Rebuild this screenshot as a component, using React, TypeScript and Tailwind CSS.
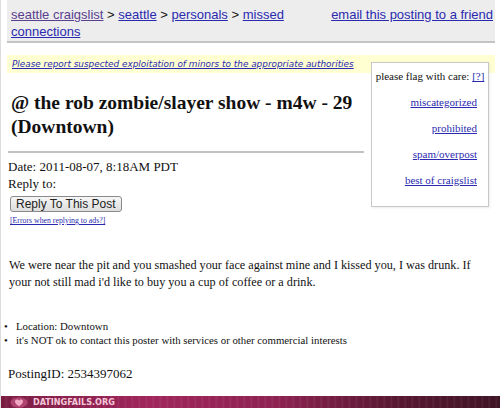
import React from "react";

const serif = { fontFamily: '"Liberation Serif", "Times New Roman", serif' };
const sans = { fontFamily: '"Liberation Sans", Arial, sans-serif' };

const flagLinks = ["miscategorized", "prohibited", "spam/overpost", "best of craigslist"];

function HeartLogo() {
  return (
    <svg width="18" height="11" viewBox="0 0 18 11">
      <ellipse cx="9" cy="5.5" rx="8.5" ry="5.2" fill="#b84a78" opacity="0.85" />
      <path d="M9 9.2 C5 6.6 4.4 4.6 5.4 3.2 C6.4 1.9 8.2 2.3 9 3.6 C9.8 2.3 11.6 1.9 12.6 3.2 C13.6 4.6 13 6.6 9 9.2 Z" fill="#f0a8c4" />
    </svg>
  );
}

export default function App() {
  return (
    <div className="relative w-[500px] h-[408px] bg-white overflow-hidden border-l border-[#dcdcdc] flex flex-col text-[#111]">
      {/* breadcrumb bar */}
      <div
        className="ml-[6px] mr-[5px] h-[43px] bg-[#ededed] border-b-2 border-[#c4c4c4] flex justify-between pl-[4px] pr-[2px] pt-[6px] text-[13px] leading-[17px]"
        style={sans}
      >
        <div className="w-[290px]">
          <div>
            <a className="underline text-[#5a3f8f]">seattle craigslist</a> &gt;{" "}
            <a className="underline text-[#2a2ab0]">seattle</a> &gt;{" "}
            <a className="underline text-[#2a2ab0]">personals</a> &gt;{" "}
            <a className="underline text-[#2a2ab0]">missed</a>
          </div>
          <a className="underline text-[#2a2ab0]">connections</a>
        </div>
        <a className="underline text-[#2a2ab0]">email this posting to a friend</a>
      </div>

      {/* warning strip */}
      <div className="ml-[6px] mr-[5px] mt-[12px] h-[18px] bg-[#ffffd2] pl-[5px] flex items-center">
        <a
          className="italic underline text-[#2a2ab0] text-[8.9px] leading-[11px]"
          style={{ fontFamily: '"DejaVu Sans", Verdana, sans-serif' }}
        >
          Please report suspected exploitation of minors to the appropriate authorities
        </a>
      </div>

      {/* flag box */}
      <div
        className="absolute left-[370px] top-[62px] w-[118px] h-[145px] bg-white border border-[#c8c8c8] shadow-[1px_1px_2px_rgba(0,0,0,0.08)] flex flex-col items-end pt-[7px] text-[11px] leading-[13px]"
        style={serif}
      >
        <div className="w-full text-center">
          please flag with care: <a className="underline text-[#2a2ab0]">[?]</a>
        </div>
        <div className="flex flex-col items-end gap-[13px] mt-[13px] pr-[11px]">
          {flagLinks.map((l) => (
            <a key={l} className="underline text-[#2a2ab0]">
              {l}
            </a>
          ))}
        </div>
      </div>

      <div className="pl-[9px]" style={serif}>
        <h2 className="w-[350px] mt-[18px] text-[19.5px] leading-[24px] font-bold pl-[1px]">
          @ the rob zombie/slayer show - m4w - 29 (Downtown)
        </h2>
        <div className="w-[356px] -ml-[2px] mt-[12px] border-t-2 border-[#c2c2c2]" />

        <div className="mt-[5px] text-[13px] leading-[17px] -ml-[2px]">
          <div>Date: 2011-08-07, 8:18AM PDT</div>
          <div>Reply to:</div>
        </div>
        <button
          className="mt-[4px] h-[16px] px-[5px] text-[12px] leading-[14px] text-[#222] border border-[#8a8a8a] rounded-[3px] bg-[linear-gradient(#f6f6f6,#dedede)] flex items-center"
          style={sans}
        >
          Reply To This Post
        </button>
        <div className="mt-[4px] text-[7.8px] leading-[9px]">
          <a className="underline text-[#2a2ab0]">[Errors when replying to ads?]</a>
        </div>

        <p className="mt-[32px] -ml-[1px] pr-[12px] text-[12.2px] leading-[17px]">
          We were near the pit and you smashed your face against mine and I kissed you, I was drunk. If
          your not still mad i'd like to buy you a cup of coffee or a drink.
        </p>

        <ul className="mt-[28px] -ml-[9px] text-[10.8px] leading-[14px]">
          <li className="flex">
            <span className="w-[15px] pl-[3px]">•</span>
            <span>Location: Downtown</span>
          </li>
          <li className="flex">
            <span className="w-[15px] pl-[3px]">•</span>
            <span>it's NOT ok to contact this poster with services or other commercial interests</span>
          </li>
        </ul>

        <div className="mt-[18px] -ml-[2px] text-[13px] leading-[17px]">PostingID: 2534397062</div>
      </div>

      {/* watermark footer */}
      <div className="mt-auto h-[12px] flex items-center gap-[5px] pl-[9px] bg-[repeating-linear-gradient(90deg,rgba(255,255,255,0)_0px,rgba(255,255,255,0)_4px,rgba(255,255,255,0.07)_5px,rgba(255,255,255,0)_7px),linear-gradient(90deg,#7a1c42_0%,#a0265c_30%,#8e2252_55%,#5a1832_78%,#3f1424_100%)]">
        <HeartLogo />
        <span
          className="font-bold text-[9px] leading-[10px] tracking-[0px] text-[#f4c8d8]"
          style={{ fontFamily: '"DejaVu Sans Condensed", "Liberation Sans Narrow", "DejaVu Sans", sans-serif', fontStretch: "condensed" }}
        >
          DATINGFAILS.ORG
        </span>
      </div>
    </div>
  );
}
